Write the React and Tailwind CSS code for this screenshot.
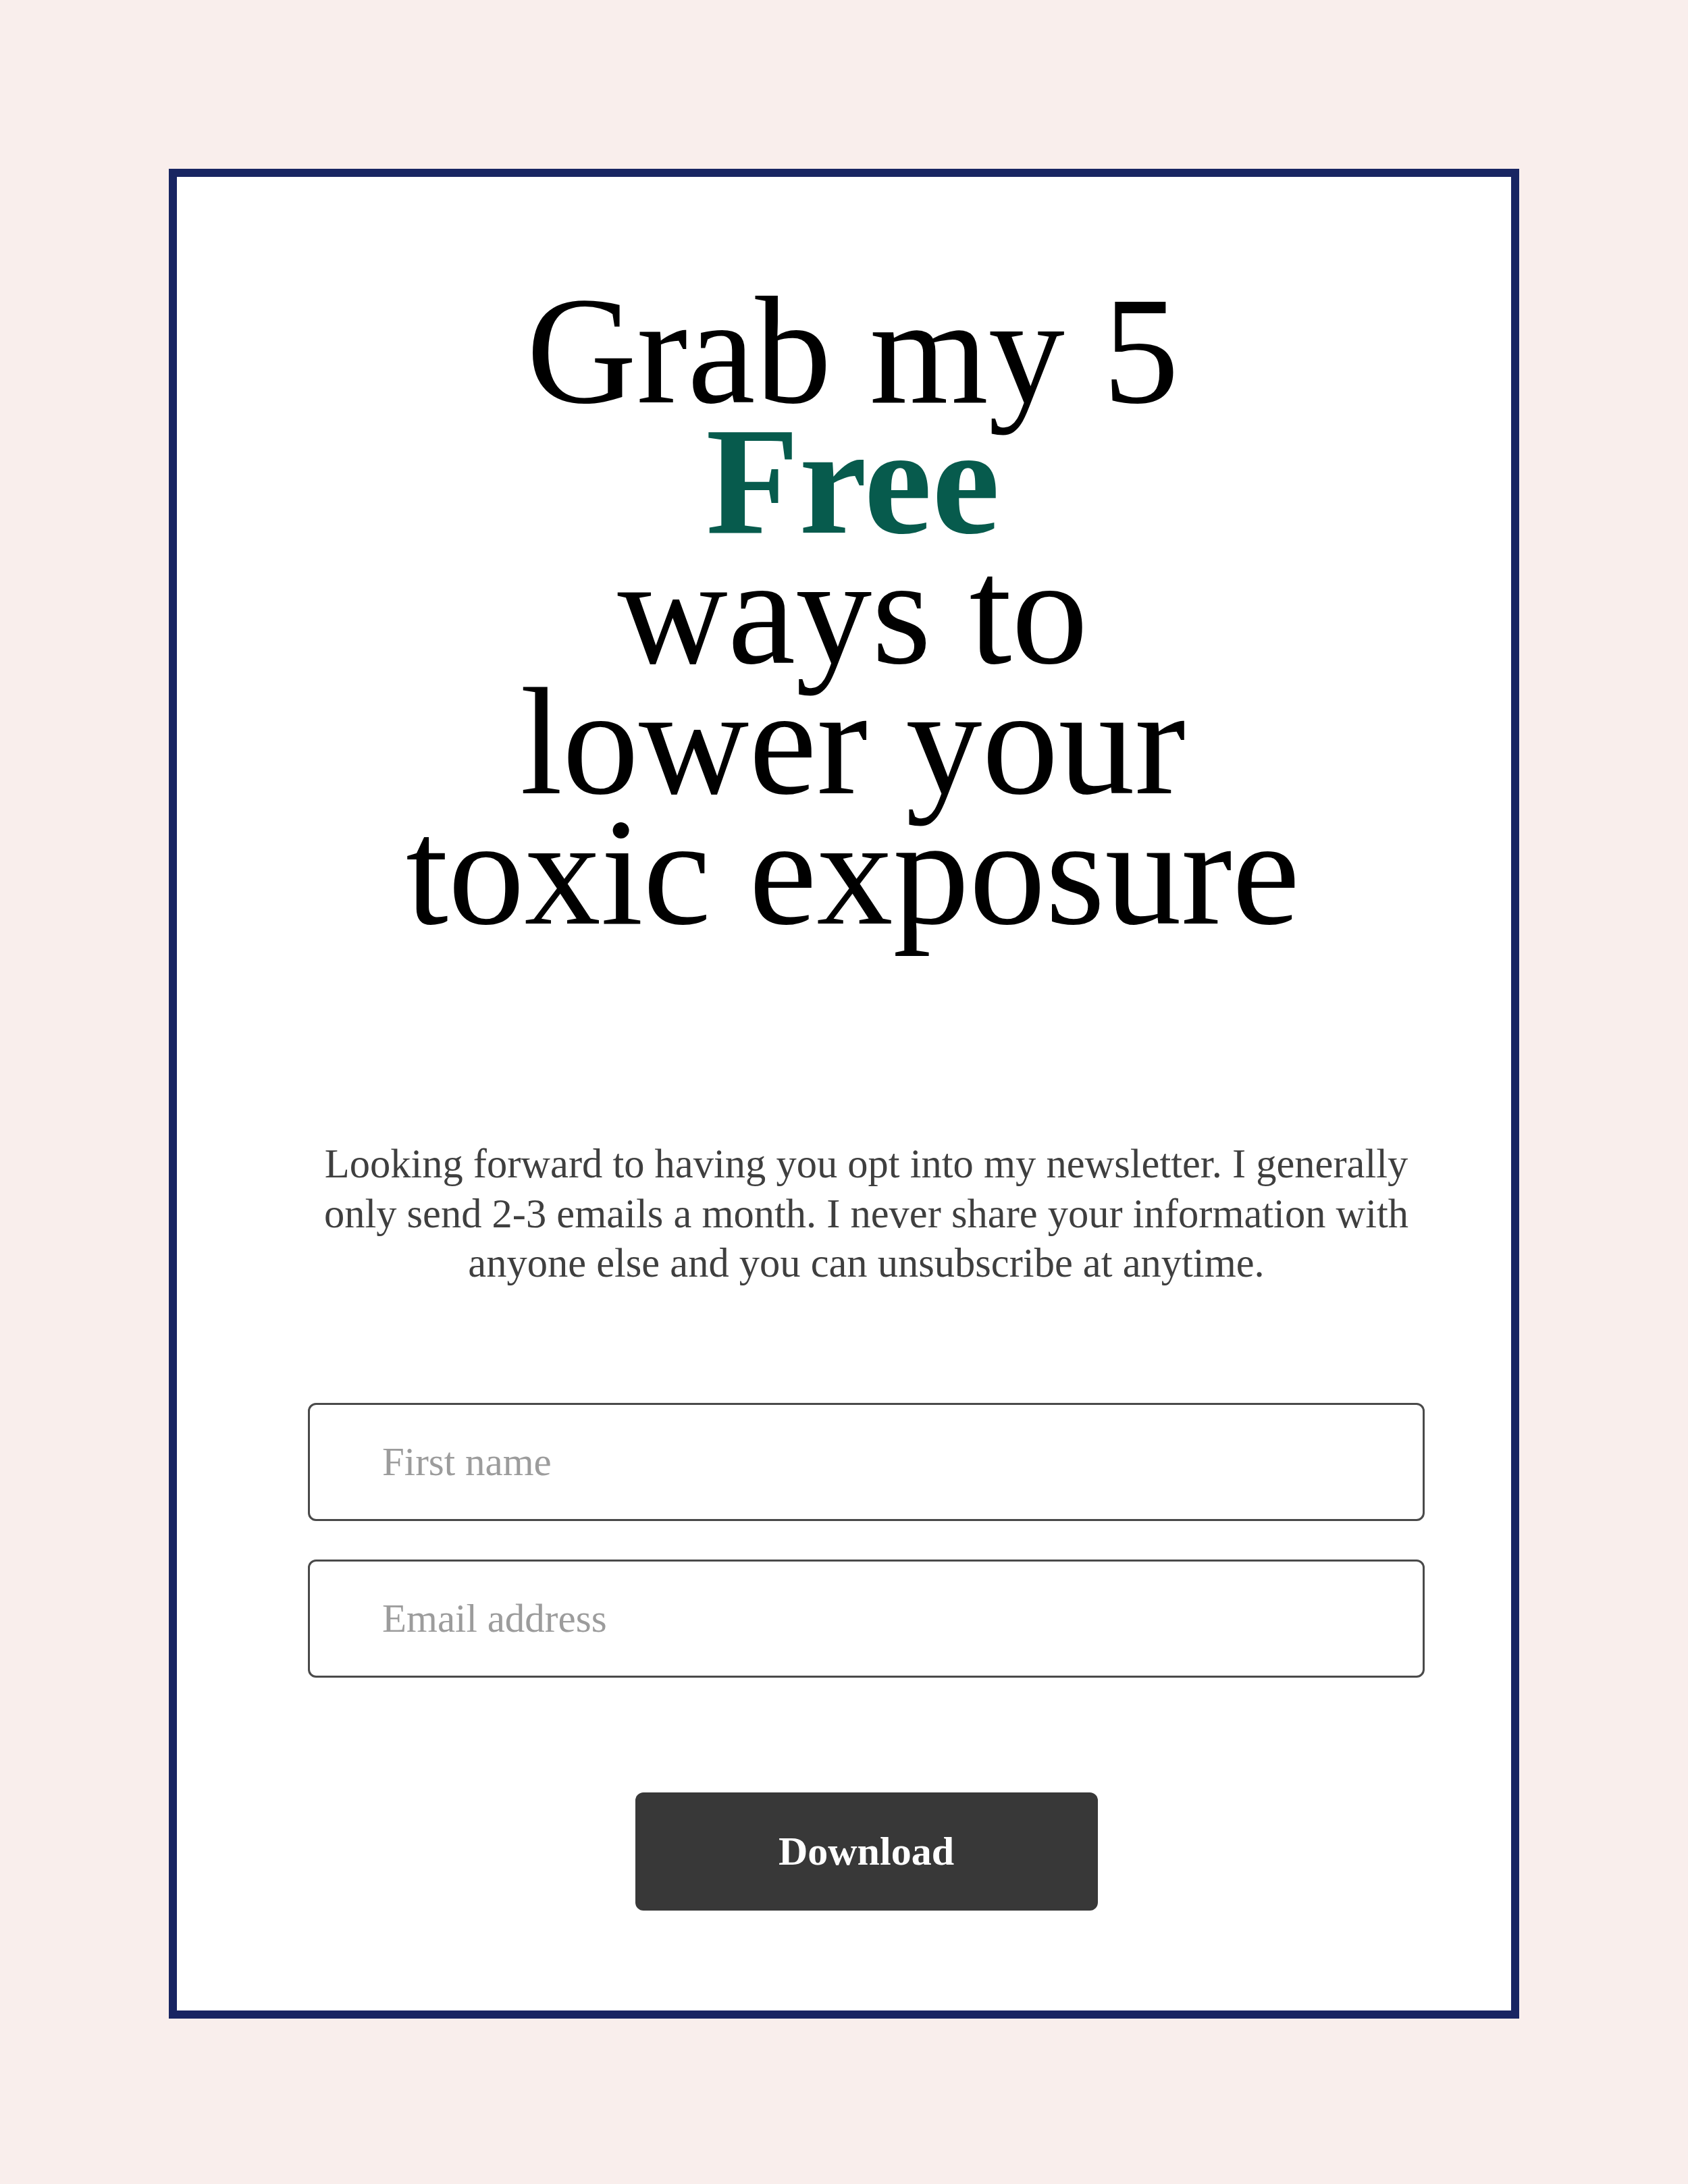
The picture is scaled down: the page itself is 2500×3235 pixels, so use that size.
import React from "react";

const serif = { fontFamily: '"Liberation Serif", "Times New Roman", serif' };

export default function App() {
  return (
    <div className="min-h-[3235px] w-full bg-[#f9eeec] px-[250px] pt-[250px]" style={serif}>
      <div className="w-[2000px] border-[12px] border-[#182562] bg-white pt-[162px] pb-[148px]">
        {/* Heading */}
        <h1 className="pl-[26px] text-center text-[226px] leading-[193px] font-normal text-black">
          Grab my 5
          <br />
          <span className="font-bold text-[#075b4d]">Free</span>
          <br />
          ways to
          <br />
          lower your
          <br />
          toxic exposure
        </h1>

        {/* Form column */}
        <div className="ml-[194px] mr-[128px] mt-[298px] flex flex-col items-center">
          <p className="text-center text-[60.5px] leading-[73.5px] text-[#3f3f3f] whitespace-nowrap">
            Looking forward to having you opt into my newsletter. I generally
            <br />
            only send 2-3 emails a month. I never share your information with
            <br />
            anyone else and you can unsubscribe at anytime.
          </p>

          <form className="mt-[170px] flex w-full flex-col gap-[57px]" onSubmit={(e) => e.preventDefault()}>
            <input
              type="text"
              placeholder="First name"
              className="h-[175px] w-full rounded-[12px] border-[3px] border-[#4a4a4a] bg-white pl-[107px] text-[59px] text-[#333] placeholder:text-[#9c9c9c] outline-none"
              style={serif}
            />
            <input
              type="email"
              placeholder="Email address"
              className="h-[175px] w-full rounded-[12px] border-[3px] border-[#4a4a4a] bg-white pl-[107px] text-[59px] text-[#333] placeholder:text-[#9c9c9c] outline-none"
              style={serif}
            />
            <div className="mt-[113px] flex justify-center">
              <button
                type="submit"
                className="h-[175px] w-[685px] rounded-[12px] bg-[#383838] text-[60px] font-bold text-white"
                style={serif}
              >
                Download
              </button>
            </div>
          </form>
        </div>
      </div>
    </div>
  );
}
